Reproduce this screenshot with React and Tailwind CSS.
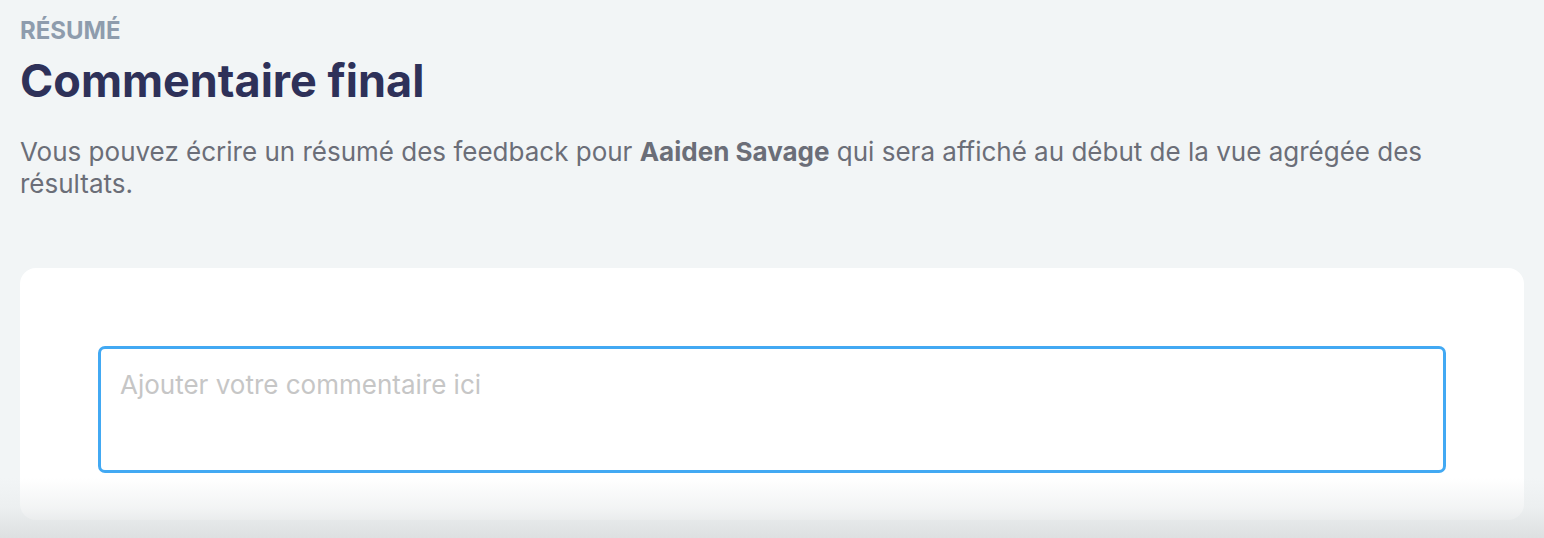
export default function App() {
  return (
    <div className="relative w-[1544px] h-[538px] overflow-hidden bg-[#f2f5f6]" style={{ fontFamily: "Inter, 'Open Sans', sans-serif" }}>
      <div className="px-5 pt-[17px]">
        <div className="text-[24px] leading-[28px] font-bold text-[#8e9cad]">RÉSUMÉ</div>
        <h1 className="mt-[10px] text-[45px] leading-[52px] font-bold text-[#2e3159]">Commentaire final</h1>
        <p className="mt-[29px] text-[26px] leading-[32px] text-[#6b6e78] max-w-[1420px]">
          Vous pouvez écrire un résumé des feedback pour <span className="font-bold">Aaiden Savage</span> qui sera affiché au début de la vue agrégée des résultats.
        </p>
        <div className="mt-[68px] bg-white rounded-[16px] h-[252px] w-[1504px] px-[78px] pt-[78px]">
          <div className="h-[127px] border-[3px] border-[#42a9f3] rounded-[7px] px-[19px] pt-[20px]">
            <div className="text-[26px] leading-[32px] text-[#c6c6c6]">Ajouter votre commentaire ici</div>
          </div>
        </div>
      </div>
      <div className="pointer-events-none absolute left-0 right-0 bottom-0 h-[60px] bg-gradient-to-b from-transparent via-[#e6e9ea]/50 to-[#dcdfe0]/95" />
    </div>
  );
}
